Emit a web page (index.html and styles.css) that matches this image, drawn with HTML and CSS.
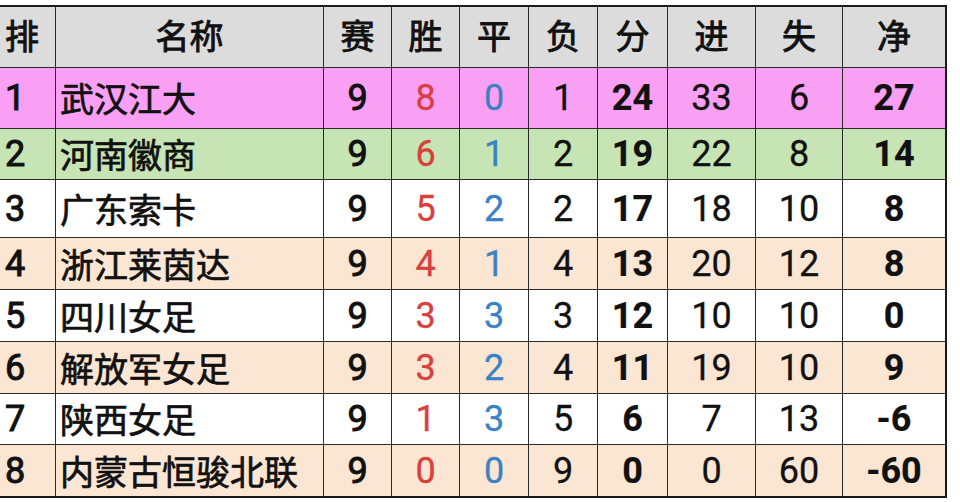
FILE: index.html
```html
<!DOCTYPE html>
<html lang="zh-CN">
<head>
<meta charset="utf-8">
<title>积分榜</title>
<link rel="stylesheet" href="styles.css">
</head>
<body>
<div class="board">
  <div class="row head">
    <div class="cell rank">排</div>
    <div class="cell">名称</div>
    <div class="cell">赛</div>
    <div class="cell">胜</div>
    <div class="cell">平</div>
    <div class="cell">负</div>
    <div class="cell">分</div>
    <div class="cell">进</div>
    <div class="cell">失</div>
    <div class="cell">净</div>
  </div>
  <div class="row pink h61">
    <div class="cell rank num">1</div><div class="cell name">武汉江大</div><div class="cell num med">9</div><div class="cell num win">8</div><div class="cell num draw">0</div><div class="cell num">1</div><div class="cell num bold">24</div><div class="cell num">33</div><div class="cell num">6</div><div class="cell num bold">27</div>
  </div>
  <div class="row green h51">
    <div class="cell rank num">2</div><div class="cell name">河南徽商</div><div class="cell num med">9</div><div class="cell num win">6</div><div class="cell num draw">1</div><div class="cell num">2</div><div class="cell num bold">19</div><div class="cell num">22</div><div class="cell num">8</div><div class="cell num bold">14</div>
  </div>
  <div class="row white h58">
    <div class="cell rank num">3</div><div class="cell name">广东索卡</div><div class="cell num med">9</div><div class="cell num win">5</div><div class="cell num draw">2</div><div class="cell num">2</div><div class="cell num bold">17</div><div class="cell num">18</div><div class="cell num">10</div><div class="cell num bold">8</div>
  </div>
  <div class="row peach h52">
    <div class="cell rank num">4</div><div class="cell name">浙江莱茵达</div><div class="cell num med">9</div><div class="cell num win">4</div><div class="cell num draw">1</div><div class="cell num">4</div><div class="cell num bold">13</div><div class="cell num">20</div><div class="cell num">12</div><div class="cell num bold">8</div>
  </div>
  <div class="row white h52">
    <div class="cell rank num">5</div><div class="cell name">四川女足</div><div class="cell num med">9</div><div class="cell num win">3</div><div class="cell num draw">3</div><div class="cell num">3</div><div class="cell num bold">12</div><div class="cell num">10</div><div class="cell num">10</div><div class="cell num bold">0</div>
  </div>
  <div class="row peach h52">
    <div class="cell rank num">6</div><div class="cell name">解放军女足</div><div class="cell num med">9</div><div class="cell num win">3</div><div class="cell num draw">2</div><div class="cell num">4</div><div class="cell num bold">11</div><div class="cell num">19</div><div class="cell num">10</div><div class="cell num bold">9</div>
  </div>
  <div class="row white h51">
    <div class="cell rank num">7</div><div class="cell name">陕西女足</div><div class="cell num med">9</div><div class="cell num win">1</div><div class="cell num draw">3</div><div class="cell num">5</div><div class="cell num bold">6</div><div class="cell num">7</div><div class="cell num">13</div><div class="cell num bold">-6</div>
  </div>
  <div class="row peach h51 last">
    <div class="cell rank num">8</div><div class="cell name">内蒙古恒骏北联</div><div class="cell num med">9</div><div class="cell num win">0</div><div class="cell num draw">0</div><div class="cell num">9</div><div class="cell num bold">0</div><div class="cell num">0</div><div class="cell num">60</div><div class="cell num bold">-60</div>
  </div>
</div>
</body>
</html>
```

FILE: styles.css
```css
html, body {
  margin: 0;
  padding: 0;
  background: #ffffff;
}

body {
  font-family: "Noto Sans CJK SC", "Noto Sans", sans-serif;
  color: #111111;
  overflow: hidden;
}

.board {
  margin-top: 5px;
  width: 947px;
  box-sizing: border-box;
  border-top: 2px solid #1a1a1a;
  border-right: 2px solid #1a1a1a;
  border-bottom: 2px solid #1a1a1a;
}

.row {
  display: grid;
  grid-template-columns: 56px 268px 68px 68px 69px 69px 70px 88px 87px 102px;
  border-bottom: 1px solid #2a2a2a;
  box-sizing: border-box;
}

.row.last {
  border-bottom: none;
}

.cell {
  display: flex;
  align-items: center;
  justify-content: center;
  border-right: 1px solid #2a2a2a;
  box-sizing: border-box;
  font-size: 34px;
  line-height: 1;
  white-space: nowrap;
  -webkit-text-stroke: 0.5px currentColor;
}

.cell:last-child {
  border-right: none;
}

.head {
  height: 61px;
  background: #dcdcdc;
}

.head .cell {
  font-weight: 400;
  padding-bottom: 4px;
  -webkit-text-stroke: 0.9px currentColor;
}

.cell.rank {
  justify-content: flex-start;
  padding-left: 5px;
}

.cell.name {
  justify-content: flex-start;
  padding-left: 4px;
  font-size: 34px;
  -webkit-text-stroke: 0.7px currentColor;
}

.cell.num {
  font-family: Roboto, "Noto Sans", sans-serif;
  font-size: 36px;
  font-weight: 400;
  -webkit-text-stroke: 0.3px currentColor;
}

.cell.rank.num,
.cell.num.med {
  -webkit-text-stroke: 1px currentColor;
}

.cell.num.bold {
  font-weight: 700;
  -webkit-text-stroke: 0.2px currentColor;
}

.cell.win {
  color: #d8403e;
}

.cell.draw {
  color: #3b82c4;
}

.pink { background: #f9a0f5; }
.green { background: #c6e4b4; }
.white { background: #ffffff; }
.peach { background: #fbe5d3; }

.h61 { height: 61px; }
.h58 { height: 58px; }
.h52 { height: 52px; }
.h51 { height: 51px; }
```
